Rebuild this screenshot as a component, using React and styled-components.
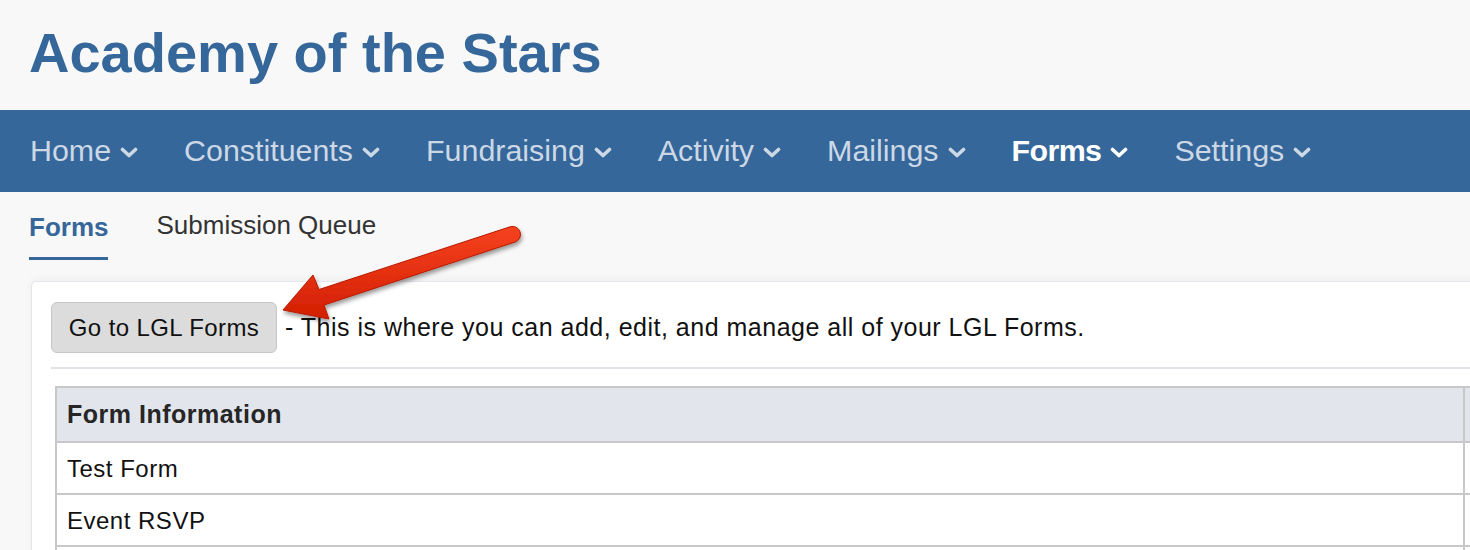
import styled, { createGlobalStyle } from 'styled-components'

const tabs = [
  { label: 'Forms', active: true },
  { label: 'Submission Queue' },
]

const menu = [
  { label: 'Home' },
  { label: 'Constituents' },
  { label: 'Fundraising' },
  { label: 'Activity' },
  { label: 'Mailings' },
  { label: 'Forms', active: true },
  { label: 'Settings' },
]

const forms = ['Test Form', 'Event RSVP', '']

export default function App() {
  return (
    <>
      <GlobalStyle />
      <Page>
        <Header>
          <Title>Academy of the Stars</Title>
        </Header>
        <NavBar>
          {menu.map((item) => (
            <NavItem key={item.label} $active={item.active}>
              {item.label}
              <Chevron />
            </NavItem>
          ))}
        </NavBar>
        <Main>
          <TabList>
            {tabs.map((tab) => (
              <Tab key={tab.label} $active={tab.active}>
                {tab.label}
              </Tab>
            ))}
          </TabList>
          <Card>
            <Intro>
              <Button>Go to LGL Forms</Button>
              <IntroText>- This is where you can add, edit, and manage all of your LGL Forms.</IntroText>
            </Intro>
            <Divider />
            <Table>
              <colgroup>
                <col style={{ width: 1408 }} />
                <col style={{ width: 240 }} />
              </colgroup>
              <thead>
                <tr>
                  <HeadCell>Form Information</HeadCell>
                  <HeadCell />
                </tr>
              </thead>
              <tbody>
                {forms.map((name, i) => (
                  <tr key={i}>
                    <Cell>{name}</Cell>
                    <Cell />
                  </tr>
                ))}
              </tbody>
            </Table>
          </Card>
          <Arrow />
        </Main>
      </Page>
    </>
  )
}

function Chevron() {
  return (
    <ChevronIcon viewBox="0 0 18 11" aria-hidden="true">
      <polyline points="2.5,2.5 9,8.5 15.5,2.5" />
    </ChevronIcon>
  )
}

// annotation arrow pointing at the button
function Arrow() {
  return (
    <ArrowSvg viewBox="260 200 280 130" aria-hidden="true">
      <defs>
        <linearGradient id="arrowFill" x1="0" y1="0" x2="0" y2="1">
          <stop offset="0" stopColor="#f5421f" />
          <stop offset="1" stopColor="#d21f02" />
        </linearGradient>
        <filter id="arrowShadow" x="-20%" y="-20%" width="140%" height="160%">
          <feDropShadow dx="1" dy="3" stdDeviation="2.2" floodColor="#000" floodOpacity="0.4" />
        </filter>
      </defs>
      <path
        d="M283 308 L329 317 L324 303 L515 240 A8 8 0 0 0 510 224.8 L319 287.5 L313 273 Z"
        fill="url(#arrowFill)"
        stroke="#b81a00"
        strokeWidth="1"
        strokeLinejoin="round"
        filter="url(#arrowShadow)"
      />
    </ArrowSvg>
  )
}

const GlobalStyle = createGlobalStyle`
  html, body {
    margin: 0;
    padding: 0;
    overflow: hidden;
    background: #f8f8f8;
    font-family: "Liberation Sans", Arial, sans-serif;
  }
`

const Page = styled.div`
  width: 100%;
`

const Header = styled.header`
  height: 110px;
  box-sizing: border-box;
  padding: 21px 0 0 29px;
`

const Title = styled.h1`
  margin: 0;
  font-size: 56px;
  line-height: 64px;
  font-weight: 700;
  color: #35679a;
`

const NavBar = styled.nav`
  display: flex;
  align-items: center;
  gap: 46px;
  height: 82px;
  padding: 0 0 2px 30px;
  box-sizing: border-box;
  background: #35679a;
`

const NavItem = styled.div`
  display: flex;
  align-items: center;
  gap: 9px;
  font-size: 30.4px;
  font-weight: ${(p) => (p.$active ? 700 : 400)};
  letter-spacing: ${(p) => (p.$active ? '-0.6px' : '0')};
  color: ${(p) => (p.$active ? '#ffffff' : '#cdd8e6')};
`

const ChevronIcon = styled.svg`
  width: 18px;
  height: 11px;
  margin-top: 4px;
  fill: none;
  stroke: currentColor;
  stroke-width: 3.6;
  stroke-linecap: round;
  stroke-linejoin: round;
`

const Main = styled.main`
  position: relative;
  padding-left: 29px;
`

const TabList = styled.div`
  display: flex;
  align-items: flex-start;
  gap: 48px;
  height: 89px;
`

const Tab = styled.div`
  padding: ${(p) => (p.$active ? '20px 0 15px' : '18px 0 15px')};
  font-size: 26px;
  line-height: 30px;
  font-weight: ${(p) => (p.$active ? 700 : 400)};
  color: ${(p) => (p.$active ? '#35679a' : '#333333')};
  border-bottom: 3px solid ${(p) => (p.$active ? '#35679a' : 'transparent')};
`

const Card = styled.section`
  width: 1720px;
  margin-left: 2px;
  padding: 20px 0 0 19px;
  background: #ffffff;
  border: 1px solid #e4e7ec;
  border-radius: 5px;
  box-shadow: 0 -3px 9px rgba(0, 0, 0, 0.035);
`

const Intro = styled.div`
  display: flex;
  align-items: center;
  gap: 8px;
`

const Button = styled.button`
  width: 226px;
  height: 51px;
  padding: 0;
  font-family: inherit;
  font-size: 24px;
  letter-spacing: 0.4px;
  color: #111111;
  background: #dcdcdc;
  border: 1px solid #c6c6c6;
  border-radius: 6px;
`

const IntroText = styled.span`
  font-size: 25px;
  letter-spacing: 0.5px;
  color: #111111;
`

const Divider = styled.hr`
  margin: 14px 0 17px;
  border: none;
  height: 2px;
  background: #dfe2e7;
`

const Table = styled.table`
  margin-left: 4px;
  border-collapse: collapse;
  table-layout: fixed;
  width: 1648px;
`

const HeadCell = styled.th`
  height: 53px;
  padding: 0 0 0 10px;
  text-align: left;
  font-size: 25px;
  font-weight: 700;
  letter-spacing: 0.5px;
  color: #262626;
  background: #e2e5ec;
  border: 2px solid #c8c8c8;
`

const Cell = styled.td`
  height: 52px;
  padding: 2px 0 0 10px;
  box-sizing: border-box;
  font-size: 24px;
  letter-spacing: 0.5px;
  color: #111111;
  background: #ffffff;
  border: 2px solid #c8c8c8;
`

const ArrowSvg = styled.svg`
  position: absolute;
  left: 260px;
  top: 10px;
  width: 280px;
  height: 130px;
  overflow: visible;
`
